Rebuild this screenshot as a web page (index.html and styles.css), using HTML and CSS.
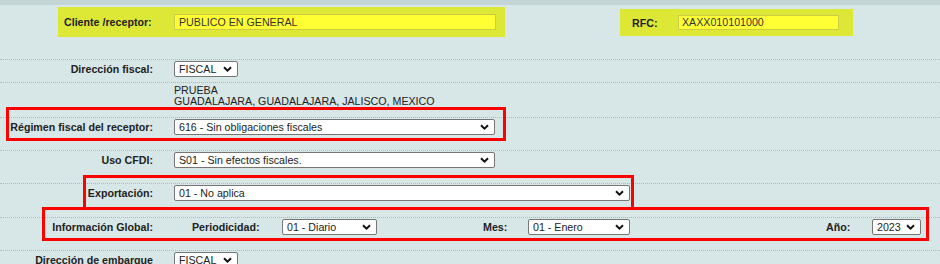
FILE: index.html
```html
<!DOCTYPE html>
<html lang="es">
<head>
    <meta charset="UTF-8">
    <title>Datos del receptor</title>
    <link rel="stylesheet" href="styles.css">
</head>
<body>
    <div class="band"></div>

    <div class="header">
        <div class="hbox cliente">
            <span class="hlabel">Cliente /receptor:</span>
            <span class="input cliente-input">PUBLICO EN GENERAL</span>
        </div>
        <div class="hbox rfc">
            <span class="hlabel">RFC:</span>
            <span class="input rfc-input">XAXX010101000</span>
        </div>
    </div>

    <div class="form">
        <div class="row row-short">
            <div class="lab">Dirección fiscal:</div>
            <div class="field">
                <span class="sel w-fiscal">FISCAL <svg viewBox="0 0 9 6"><path d="M1 1.2 L4.5 4.6 L8 1.2"/></svg></span>
            </div>
        </div>

        <div class="row row-addr">
            <div class="lab"></div>
            <div class="field addr">PRUEBA<br>GUADALAJARA, GUADALAJARA, JALISCO, MEXICO</div>
        </div>

        <div class="row">
            <div class="lab">Régimen fiscal del receptor:</div>
            <div class="field">
                <span class="sel w-long">616 - Sin obligaciones fiscales <svg viewBox="0 0 9 6"><path d="M1 1.2 L4.5 4.6 L8 1.2"/></svg></span>
            </div>
        </div>

        <div class="row">
            <div class="lab">Uso CFDI:</div>
            <div class="field">
                <span class="sel w-long">S01 - Sin efectos fiscales. <svg viewBox="0 0 9 6"><path d="M1 1.2 L4.5 4.6 L8 1.2"/></svg></span>
            </div>
        </div>

        <div class="row row-tall">
            <div class="lab">Exportación:</div>
            <div class="field">
                <span class="sel w-export">01 - No aplica <svg viewBox="0 0 9 6"><path d="M1 1.2 L4.5 4.6 L8 1.2"/></svg></span>
            </div>
        </div>

        <div class="row row-global">
            <div class="lab">Información Global:</div>
            <div class="sublab periodo">Periodicidad:</div>
            <span class="sel w-periodo">01 - Diario <svg viewBox="0 0 9 6"><path d="M1 1.2 L4.5 4.6 L8 1.2"/></svg></span>
            <div class="sublab mes">Mes:</div>
            <span class="sel w-mes">01 - Enero <svg viewBox="0 0 9 6"><path d="M1 1.2 L4.5 4.6 L8 1.2"/></svg></span>
            <div class="sublab anio">Año:</div>
            <span class="sel w-anio">2023 <svg viewBox="0 0 9 6"><path d="M1 1.2 L4.5 4.6 L8 1.2"/></svg></span>
        </div>

        <div class="row row-last">
            <div class="lab">Dirección de embarque</div>
            <div class="field">
                <span class="sel w-fiscal">FISCAL <svg viewBox="0 0 9 6"><path d="M1 1.2 L4.5 4.6 L8 1.2"/></svg></span>
            </div>
        </div>
    </div>

    <!-- red marks drawn over the form -->
    <div class="mark mark-regimen"></div>
    <div class="mark mark-export"></div>
    <div class="mark mark-global"></div>
</body>
</html>
```

FILE: styles.css
```css
body { margin: 0; background: #d7e6e6; font-family: "Liberation Sans", Arial, sans-serif; font-size: 10.667px; color: #222; position: relative; height: 264px; overflow: hidden; }
.band { height: 5px; background: #c4d5d5; }

.header { height: 54px; display: flex; align-items: flex-start; }
.hbox { background: #dce736; display: flex; align-items: center; box-sizing: border-box; }
.hlabel { font-weight: bold; }
.cliente { margin: 2px 0 0 58px; width: 447px; height: 30px; padding-left: 6px; }
.cliente .hlabel { width: 110px; }
.rfc { margin: 4px 0 0 115px; width: 233px; height: 27px; padding-left: 12px; }
.rfc .hlabel { width: 46px; }
.input { background: #ffff33; border: 1px solid #cccc44; box-sizing: border-box; height: 16px; line-height: 14px; padding-left: 4px; color: #333; }
.cliente-input { width: 322px; }
.rfc-input { width: 161px; height: 15px; line-height: 13px; padding-left: 3px; }

.row { display: flex; align-items: flex-start; border-top: 1px dotted #a9bdbd; height: 32px; box-sizing: content-box; }
.row-short { height: 22px; }
.row-addr { height: 34px; }
.row-tall { height: 33px; }
.row-last { height: 20px; }
.lab { width: 153px; flex: none; text-align: right; font-weight: bold; line-height: 16px; margin-top: 1px; }
.field { margin-left: 21px; margin-top: 1px; }
.addr { line-height: 11px; margin-top: 2px; color: #222; }

.sel { display: inline-flex; align-items: center; justify-content: space-between; box-sizing: border-box; height: 16px; background: #fff; border: 1px solid #767676; border-radius: 2px; padding: 0 5px 0 4px; color: #222; white-space: nowrap; flex: none; }
.sel svg { width: 9px; height: 6px; fill: none; stroke: #111; stroke-width: 2; }
.w-fiscal { width: 64px; }
.w-long { width: 321px; }
.w-export { width: 456px; }

.row-global .sel { margin-top: 1px; }
.sublab { font-weight: bold; line-height: 16px; margin-top: 1px; flex: none; }
.periodo { margin-left: 39px; width: 90px; }
.w-periodo { width: 95px; }
.mes { margin-left: 106px; width: 45px; }
.w-mes { width: 102px; }
.anio { margin-left: 196px; width: 46px; }
.w-anio { width: 49px; }

.mark { position: absolute; border: 3px solid #ff0000; box-sizing: border-box; }
.mark-regimen { left: 6px; top: 107px; width: 500px; height: 34px; }
.mark-export { left: 83px; top: 175px; width: 551px; height: 35px; }
.mark-global { left: 42px; top: 207px; width: 887px; height: 34px; }
```
